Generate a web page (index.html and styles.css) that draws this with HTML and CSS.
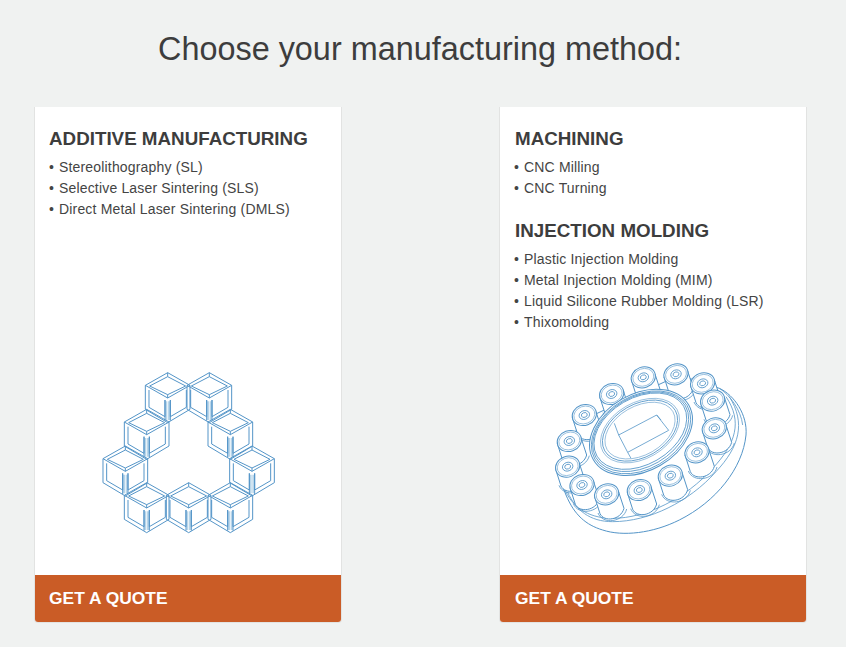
FILE: index.html
```html
<!DOCTYPE html>
<html lang="en">
<head>
<meta charset="utf-8">
<title>Choose your manufacturing method</title>
<link rel="stylesheet" href="styles.css">
</head>
<body>
<h1 class="title">Choose your manufacturing method:</h1>
<main class="cards">
  <section class="card">
    <div class="card-body">
      <h2 class="card-heading">ADDITIVE MANUFACTURING</h2>
      <ul class="methods">
        <li>Stereolithography (SL)</li>
        <li>Selective Laser Sintering (SLS)</li>
        <li>Direct Metal Laser Sintering (DMLS)</li>
      </ul>
    </div>
    <div class="art">
      <svg class="art-cubes" viewBox="0 0 585 540" aria-hidden="true">
        <defs>
          <g id="cube">
            <path class="soft" d="M-4 86V142M4 86V142"/>
            <path d="M0 0L67 38V110L0 150L-67 110V38Z"/>
            <path d="M-67 38L0 76L67 38"/>
            <path d="M0 12L54 40L0 66L-54 40Z"/>
            <path d="M0 0V12M0 66V76"/>
            <path d="M-56 52V104L-8 132V82M56 52V104L8 132V82M-8 82V144M8 82V144"/>
          </g>
        </defs>
        <use href="#cube" x="230" y="38"/>
        <use href="#cube" x="355" y="38"/>
        <use href="#cube" x="167" y="148"/>
        <use href="#cube" x="418" y="148"/>
        <use href="#cube" x="103" y="258"/>
        <use href="#cube" x="483" y="258"/>
        <use href="#cube" x="167" y="368"/>
        <use href="#cube" x="293" y="368"/>
        <use href="#cube" x="418" y="368"/>
      </svg>
    </div>
    <a class="quote" href="#">GET A QUOTE</a>
  </section>
  <section class="card">
    <div class="card-body">
      <h2 class="card-heading">MACHINING</h2>
      <ul class="methods">
        <li>CNC Milling</li>
        <li>CNC Turning</li>
      </ul>
      <h2 class="card-heading card-heading-next">INJECTION MOLDING</h2>
      <ul class="methods">
        <li>Plastic Injection Molding</li>
        <li>Metal Injection Molding (MIM)</li>
        <li>Liquid Silicone Rubber Molding (LSR)</li>
        <li>Thixomolding</li>
      </ul>
    </div>
    <div class="art">
      <svg class="art-flange" viewBox="0 0 645 555" aria-hidden="true">
        <defs>
          <g id="boss">
            <path class="fill" d="M-36 8L-20 58C-8 84 42 78 52 42L35 -10Z"/>
            <path class="thin" d="M-26 56C-12 92 50 84 60 44"/>
            <ellipse class="fill" rx="37" ry="31" transform="rotate(-20)"/>
            <ellipse class="faint" rx="32" ry="26" transform="rotate(-20)"/>
            <ellipse class="thin" rx="16" ry="13" transform="rotate(-20)"/>
            <ellipse class="thin" rx="9" ry="7" transform="rotate(-20)"/>
          </g>
        </defs>
        <path class="fill" d="M520 100C565 120 605 180 600 240C590 340 510 440 400 495C320 535 230 545 170 525C120 510 85 480 60 420L40 370L100 200L400 60Z"/>
        <path class="thin" d="M55 400C75 450 120 490 200 490C300 490 420 430 500 340C570 265 590 200 540 125"/>
        <path class="thin" d="M65 412C90 465 130 500 200 500C310 500 430 440 510 350C580 275 600 205 550 125"/>
        <path class="thin" d="M520 100C550 118 585 165 590 210"/>
        <use href="#boss" x="292" y="67"/>
        <use href="#boss" x="390" y="58"/>
        <use href="#boss" x="470" y="85"/>
        <use href="#boss" x="197" y="117"/>
        <use href="#boss" x="115" y="180"/>
        <g transform="rotate(-30 285 232)">
          <ellipse class="fill" cx="285" cy="232" rx="165" ry="115"/>
          <ellipse class="thin" cx="285" cy="232" rx="160" ry="110"/>
          <ellipse class="thin" cx="285" cy="230" rx="155" ry="105"/>
          <ellipse class="thin" cx="285" cy="228" rx="150" ry="100"/>
          <ellipse class="faint" cx="285" cy="226" rx="128" ry="84"/>
          <ellipse class="thin" cx="285" cy="226" rx="122" ry="79"/>
          <ellipse class="faint" cx="285" cy="226" rx="114" ry="73"/>
        </g>
        <path class="thin" d="M218 240L332 180L368 226L245 292Z"/>
        <path class="thin" d="M205 205L218 240M332 180L345 195M245 292L255 310"/>
        <use href="#boss" x="500" y="137"/>
        <use href="#boss" x="70" y="258"/>
        <use href="#boss" x="505" y="220"/>
        <use href="#boss" x="65" y="335"/>
        <use href="#boss" x="453" y="292"/>
        <use href="#boss" x="108" y="390"/>
        <use href="#boss" x="373" y="362"/>
        <use href="#boss" x="182" y="418"/>
        <use href="#boss" x="280" y="405"/>
      </svg>
    </div>
    <a class="quote" href="#">GET A QUOTE</a>
  </section>
</main>
</body>
</html>
```
FILE: styles.css
```css
html, body {
  margin: 0;
  padding: 0;
}
body {
  width: 846px;
  height: 647px;
  overflow: hidden;
  background: #f0f2f1;
  color: #3d3d3d;
  font-family: "Liberation Sans", Arial, sans-serif;
}
.title {
  margin: 0;
  padding: 31px 6px 0 0;
  height: 107px;
  box-sizing: border-box;
  font-size: 32.4px;
  line-height: 37px;
  font-weight: 400;
  text-align: center;
}
.cards {
  display: flex;
  gap: 157px;
  padding-left: 34px;
}
.card {
  width: 308px;
  height: 516px;
  box-sizing: border-box;
  display: flex;
  flex-direction: column;
  background: #fff;
  border: 1px solid #e2e3e2;
  border-top: 0;
  border-radius: 0 0 4px 4px;
  overflow: hidden;
}
.card-body {
  padding: 20px 14px 0;
}
.card + .card .card-body {
  padding-left: 15px;
}
.card-heading {
  margin: 0 0 7px;
  font-size: 18.8px;
  line-height: 23px;
  font-weight: 700;
}
.card-heading-next {
  margin-top: 20px;
}
.methods {
  margin: 0;
  padding: 0;
  list-style: none;
  color: #444;
  font-size: 14px;
  line-height: 21px;
  letter-spacing: 0.17px;
}
.card + .card .methods {
  margin-left: -1px;
}
.methods li::before {
  content: "\2022";
  display: inline-block;
  width: 10px;
}
.art {
  margin-top: auto;
  margin-bottom: 35px;
  display: flex;
  justify-content: center;
}
.art svg {
  display: block;
  fill: none;
  stroke: #5495c8;
  stroke-width: 3;
  stroke-linejoin: round;
}
.art svg .fill {
  fill: #fff;
}
.art svg .thin {
  stroke-width: 2.4;
}
.art svg .faint {
  stroke-width: 1.6;
}
.art svg .soft {
  stroke: #b9d6ea;
  stroke-width: 6;
}
.art-cubes {
  width: 195px;
  height: 180px;
}
.art-flange {
  width: 215px;
  height: 185px;
}
.quote {
  display: block;
  height: 47px;
  padding: 0 14px;
  background: #ca5c26;
  color: #fff;
  font-size: 17.4px;
  font-weight: 700;
  line-height: 47px;
  text-decoration: none;
}
.card + .card .quote {
  padding-left: 15px;
}
```
